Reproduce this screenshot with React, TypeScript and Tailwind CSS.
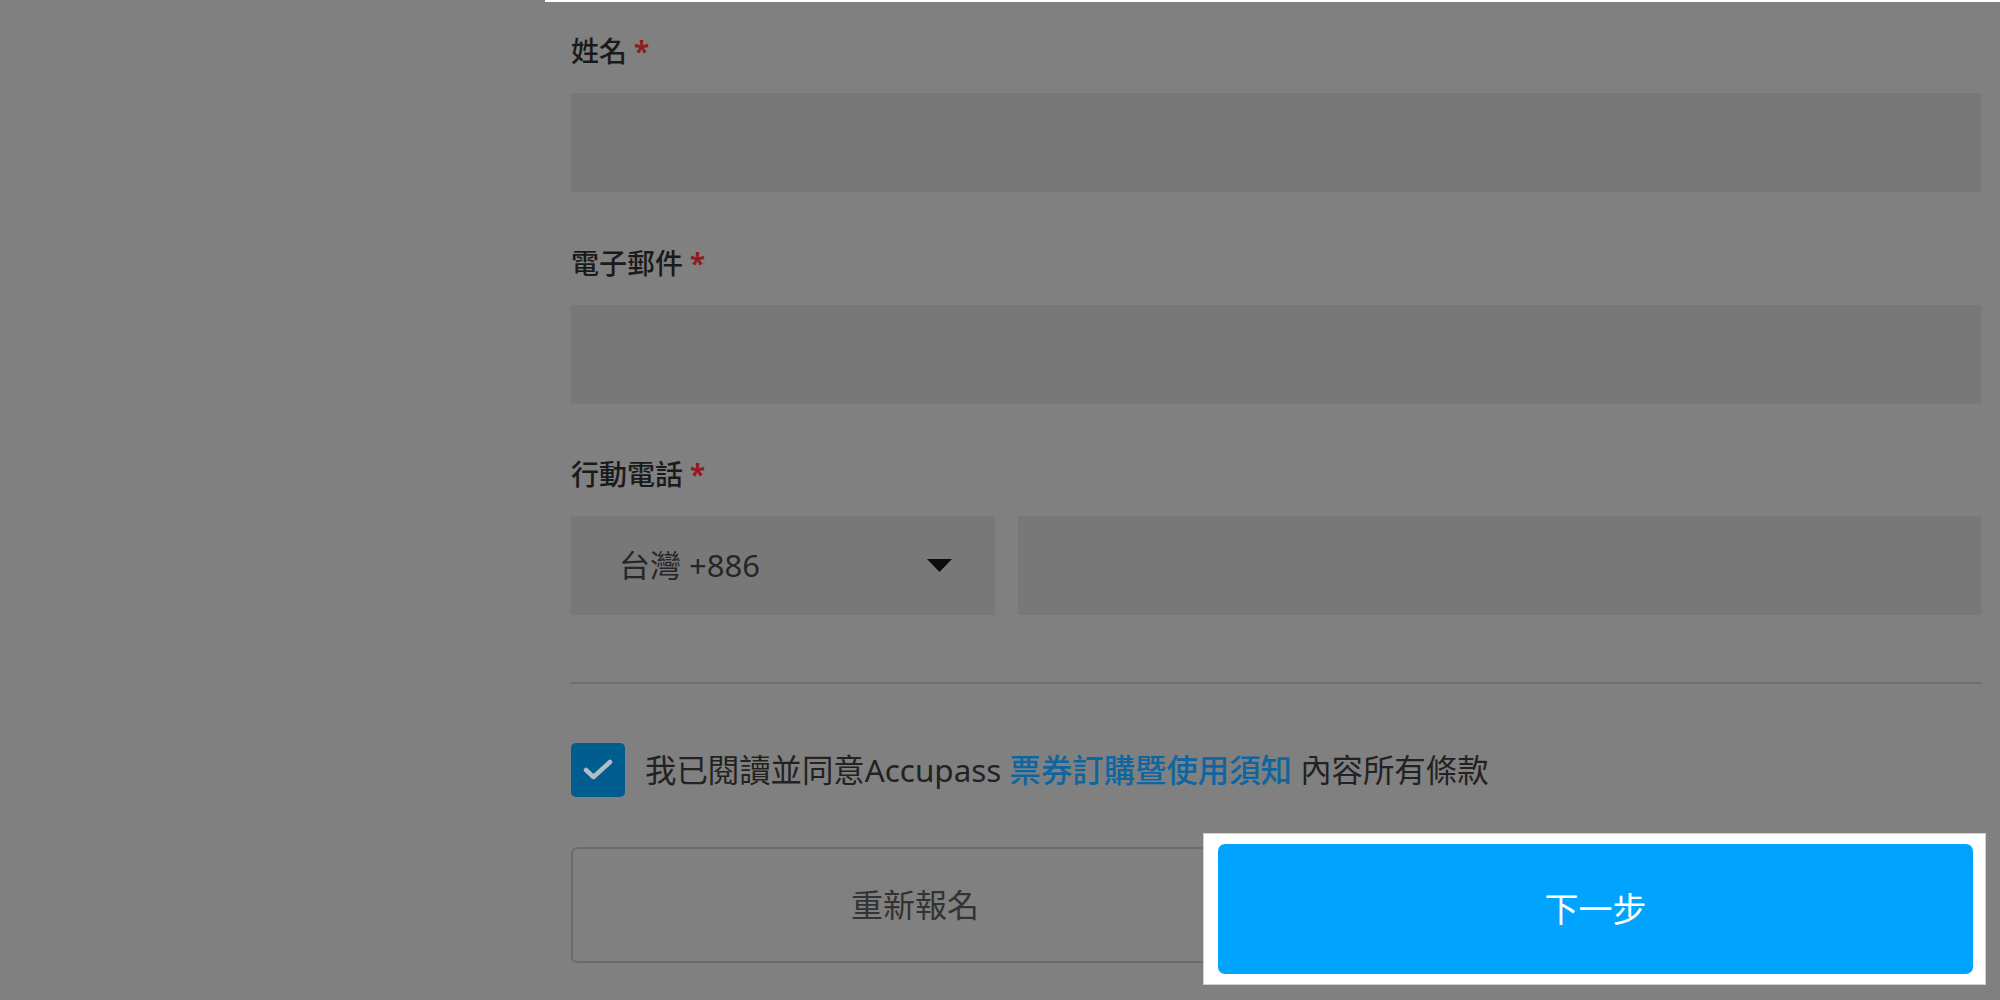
import React from "react";

const font = { fontFamily: '"Noto Sans", "Noto Sans CJK TC", sans-serif' };

function Label({ text }: { text: string }) {
  return (
    <div className="flex items-center h-[40px] text-[28px] leading-[40px] text-[#1a1a1a] font-medium">
      <span>{text}</span>
      <span className="ml-[7px] text-[#931b1e] font-bold">*</span>
    </div>
  );
}

export default function App() {
  return (
    <div className="relative w-[2000px] h-[1000px] overflow-hidden bg-[#808080] flex" style={font}>
      <div className="w-[545px] shrink-0" />
      <div className="flex-1 border-t-2 border-white pt-[29px] pl-[26px] pr-[19px] flex flex-col">
        <Label text="姓名" />
        <div className="mt-[22px] h-[99px] bg-[#787878]" />

        <div className="mt-[51px]">
          <Label text="電子郵件" />
        </div>
        <div className="mt-[22px] h-[99px] bg-[#787878]" />

        <div className="mt-[50px]">
          <Label text="行動電話" />
        </div>
        <div className="mt-[22px] h-[99px] flex gap-[23px]">
          <div className="w-[424px] bg-[#787878] flex items-center justify-between pl-[48px] pr-[43px]">
            <span className="text-[31px] text-[#262626]">台灣 +886</span>
            <svg width="25" height="13" viewBox="0 0 25 13">
              <polygon points="0,0 25,0 12.5,13" fill="#0d0d0d" />
            </svg>
          </div>
          <div className="flex-1 bg-[#787878]" />
        </div>

        <div className="mt-[67px] h-[2px] bg-[#6f6f6f]" />

        <div className="mt-[59px] flex items-center h-[54px]">
          <div className="w-[54px] h-[54px] rounded-[5px] bg-[#005d8f] flex items-center justify-center shrink-0">
            <svg width="54" height="54" viewBox="0 0 54 54">
              <polyline points="15,27 22.5,34 39,19" fill="none" stroke="#b3bdc4" strokeWidth="4.5" strokeLinecap="round" strokeLinejoin="round" />
            </svg>
          </div>
          <div className="ml-[20px] text-[31.4px] leading-[54px] text-[#222222] whitespace-nowrap">
            我已閱讀並同意Accupass <span className="text-[#0f65a0] font-medium">票券訂購暨使用須知</span> 內容所有條款
          </div>
        </div>

        <div className="mt-[50px] flex gap-[38px]">
          <div className="flex-1 h-[116px] rounded-[6px] border-2 border-[#6c6c6c] flex items-center justify-center text-[32px] text-[#333333]">
            重新報名
          </div>
          <div className="flex-1 h-[116px]" />
        </div>
      </div>

      <div className="absolute left-[1203px] top-[833px] w-[783px] h-[152px] bg-white border border-[#d0d0d0] pt-[10px] pb-[10px] pl-[14px] pr-[12px]">
        <div className="w-full h-full rounded-[7px] bg-[#00a4ff] flex items-center justify-center text-[34px] text-white">
          下一步
        </div>
      </div>
    </div>
  );
}
